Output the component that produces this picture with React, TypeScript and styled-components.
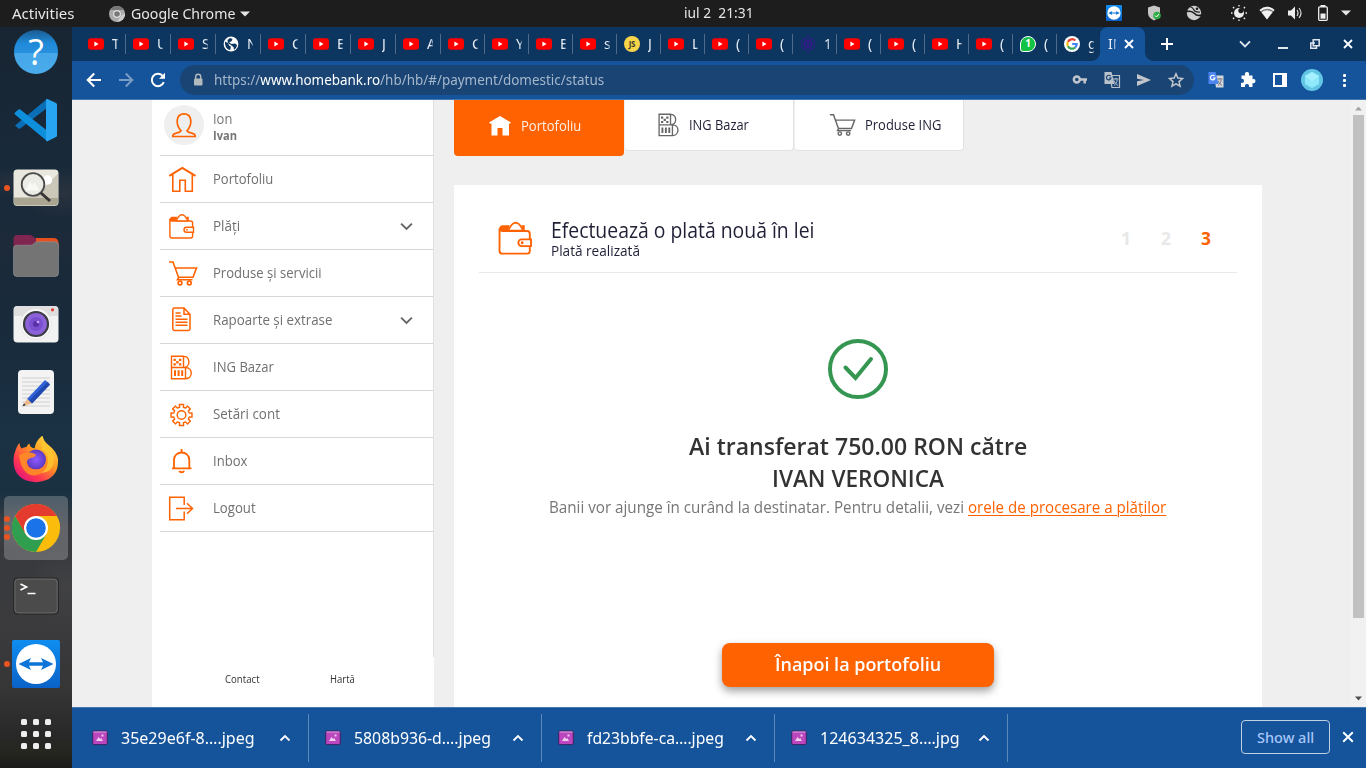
import React, { useLayoutEffect, useRef, useState } from "react";
import styled, { createGlobalStyle, css } from "styled-components";

const Global = createGlobalStyle`
  * { box-sizing: border-box; }
  html, body { margin: 0; padding: 0; overflow: hidden; }
  body { font-family: "Noto Sans", sans-serif; background: #efefef; }
  svg { display: block; flex: none; }
`;

const ui = `"Noto Sans", sans-serif`;
const page = `"Open Sans", "Noto Sans", sans-serif`;
const orange = "#ff6200";

/* ---------- condensed text ---------- */
const FitBox = styled.span<{ $w: number }>`
  display: inline-block;
  width: ${(p) => p.$w}px;
  white-space: pre;
  flex: none;
`;
const FitInner = styled.span<{ $underline?: boolean }>`
  display: inline-block;
  transform-origin: 0 50%;
  ${(p) => p.$underline && css`
    text-decoration: underline;
    text-decoration-thickness: 1px;
    text-underline-offset: 2px;
  `}
`;
function Fit({ w, underline, children }: { w: number; underline?: boolean; children: React.ReactNode }) {
  const ref = useRef<HTMLSpanElement>(null);
  const [k, setK] = useState(1);
  useLayoutEffect(() => {
    if (ref.current) setK(w / ref.current.offsetWidth);
  }, [w]);
  return (
    <FitBox $w={w}>
      <FitInner ref={ref} $underline={underline} style={{ transform: `scaleX(${k})` }}>{children}</FitInner>
    </FitBox>
  );
}

/* ---------- shell ---------- */
const Screen = styled.div`
  width: 1366px;
  height: 768px;
  overflow: hidden;
  display: flex;
  flex-direction: column;
`;
const TopBar = styled.header`
  height: 27px;
  flex: none;
  background: #1d1d1d;
  color: #e6e6e6;
  font: 14px/27px ${ui};
  display: grid;
  grid-template-columns: 684px 70px 1fr;
`;
const TopLeft = styled.div`
  display: flex;
  align-items: center;
  padding-left: 12px;
  & > svg:nth-of-type(1) { margin: 0 6px 0 35px; }
  & > svg:nth-of-type(2) { margin-left: 5px; }
`;
const Clock = styled.div`
  line-height: 26px;
`;
const TopRight = styled.div`
  display: flex;
  align-items: center;
  padding: 0 0 1px 352px;
`;
const TrayIcon = styled.span<{ $gap: number }>`
  margin-right: ${(p) => p.$gap}px;
`;
const Body = styled.div`
  display: flex;
  height: 741px;
`;
const Dock = styled.nav`
  width: 72px;
  height: 741px;
  flex: none;
  overflow: hidden;
  background:
    radial-gradient(ellipse 46px 26px at 62px 166px, #34394199, transparent),
    radial-gradient(ellipse 30px 14px at 10px 155px, #37394266, transparent),
    radial-gradient(ellipse 40px 24px at 22px 500px, #44474dcc, transparent),
    radial-gradient(ellipse 40px 40px at 66px 560px, #46464899, transparent),
    linear-gradient(#182532 0, #18293a 130px, #1c2a39 220px, #182a3b 300px, #1b3144 400px, #1a3142 465px, #36393e 500px, #3b3b3d 600px, #363637 660px, #282828 710px, #25261f 725px, #1b1b1b 741px);
`;
const DockList = styled.div`
  margin-top: -9px;
  display: flex;
  flex-direction: column;
`;
const DockSlot = styled.div<{ $active?: boolean }>`
  width: 64px;
  height: 64px;
  margin: 2px 4px;
  border-radius: 5px;
  display: flex;
  align-items: center;
  justify-content: center;
  position: relative;
  ${(p) => p.$active && css`background: #ffffff38;`}
`;
const Dots = styled.div`
  position: absolute;
  left: 0;
  top: 0;
  height: 64px;
  display: flex;
  flex-direction: column;
  justify-content: center;
  gap: 3px;
`;
const Dot = styled.i`
  width: 6px;
  height: 6px;
  border-radius: 50%;
  background: #e95420;
`;
const Browser = styled.div`
  width: 1294px;
  display: flex;
  flex-direction: column;
`;

/* ---------- browser chrome ---------- */
const TabStrip = styled.div`
  height: 34px;
  flex: none;
  padding-left: 8px;
  background: #0c3560;
  color: #e9eef5;
  font: 14px/34px ${ui};
  display: flex;
`;
const Tab = styled.div<{ $w: number; $last?: boolean }>`
  width: ${(p) => p.$w}px;
  height: 34px;
  padding-left: 8px;
  display: flex;
  align-items: center;
  position: relative;
  &::after {
    content: "";
    position: absolute;
    right: -1px;
    top: 7px;
    width: 1px;
    height: 20px;
    background: ${(p) => (p.$last ? "transparent" : "#4d6b8d")};
  }
`;
const TabText = styled.span<{ $w?: number; $ml?: number }>`
  width: ${(p) => p.$w ?? 6}px;
  margin-left: ${(p) => p.$ml ?? 8}px;
  overflow: hidden;
  white-space: nowrap;
  mask-image: linear-gradient(90deg, #000 60%, #0006);
`;
const ActiveTab = styled.div`
  width: 45px;
  height: 34px;
  padding-left: 8px;
  background: #15539a;
  border-radius: 8px 8px 0 0;
  display: flex;
  align-items: center;
  position: relative;
  & > svg { margin-left: 8px; }
  &::before, &::after {
    content: "";
    position: absolute;
    bottom: 0;
    width: 8px;
    height: 8px;
  }
  &::before { left: -8px; background: radial-gradient(circle at 0 0, transparent 7.5px, #15539a 8px); }
  &::after { right: -8px; background: radial-gradient(circle at 100% 0, transparent 7.5px, #15539a 8px); }
`;
const WindowButtons = styled.div`
  display: flex;
  align-items: center;
  padding-left: 16px;
`;
const Gap = styled.span<{ $w: number }>`
  width: ${(p) => p.$w}px;
  flex: none;
`;
const Toolbar = styled.div`
  height: 39px;
  flex: none;
  background: #15539a;
  border-bottom: 1px solid #4377b0;
  display: flex;
  align-items: center;
  padding-left: 12px;
`;
const NavIcons = styled.div`
  display: flex;
  gap: 12px;
  width: 96px;
`;
const Omnibox = styled.div`
  width: 1014px;
  height: 30px;
  border-radius: 15px;
  background: #194474;
  color: #a5b7cb;
  font: 15px/26px ${ui};
  display: flex;
  align-items: center;
  padding: 0 8px 0 8px;
  b { font-weight: 400; color: #fff; }
`;
const Url = styled.span`
  margin: -2px 0 0 6px;
  flex: 1;
`;
const OmniIcons = styled.div`
  display: flex;
  gap: 12px;
`;
const ExtIcons = styled.div`
  display: flex;
  align-items: center;
  gap: 12px;
  padding-left: 12px;
`;
const ProfileBadge = styled.span`
  margin: 0 -1px;
`;

/* ---------- page ---------- */
const Viewport = styled.main`
  height: 607px;
  background: #efefef;
  display: flex;
  font-family: ${page};
  padding-left: 80px;
  overflow: hidden;
`;
const Sidebar = styled.aside`
  width: 282px;
  height: 607px;
  background: #fff;
`;
const Menu = styled.div`
  height: 557px;
  padding-left: 8px;
  border-right: 1px solid #e0e0e0;
`;
const Profile = styled.div`
  height: 56px;
  border-bottom: 1px solid #d7d7d7;
  padding: 5px 0 0 4px;
  display: flex;
`;
const Avatar = styled.div`
  width: 40px;
  height: 40px;
  border-radius: 50%;
  background: #efefef;
  display: flex;
  align-items: center;
  justify-content: center;
`;
const Names = styled.div`
  margin: 4px 0 0 9px;
  display: flex;
  flex-direction: column;
  color: #767676;
  font-size: 15px;
  line-height: 19px;
  b { font-size: 12.5px; line-height: 16px; font-weight: 700; }
`;
const MenuRow = styled.div`
  height: 47px;
  border-bottom: 1px solid #d7d7d7;
  padding-left: 8px;
  display: flex;
  align-items: center;
  color: #707070;
  font-size: 15px;
`;
const MenuLabel = styled.span`
  margin-left: 15px;
  width: 187px;
  padding-bottom: 2px;
  line-height: 42px;
`;
const SideFooter = styled.div`
  padding-left: 73px;
  display: flex;
  gap: 70px;
  color: #333;
  font-size: 11px;
  line-height: 44px;
`;
const Main = styled.section`
  width: 808px;
  margin-left: 20px;
`;
const NavTabs = styled.div`
  height: 85px;
  display: flex;
  align-items: flex-start;
  font-size: 15px;
`;
const NavTab = styled.div<{ $on?: boolean; $pad: number; $gap: number }>`
  width: ${(p) => (p.$on ? 170 : 169)}px;
  height: ${(p) => (p.$on ? 56 : 51)}px;
  margin-left: ${(p) => (p.$on ? 0 : 1)}px;
  padding: 0 0 ${(p) => (p.$on ? 4 : 0)}px ${(p) => p.$pad}px;
  background: ${(p) => (p.$on ? orange : "#fff")};
  color: ${(p) => (p.$on ? "#fff0e6" : "#1f1f35")};
  border-radius: 0 0 4px 4px;
  ${(p) => !p.$on && css`border-right: 1px solid #e2e2e2; border-bottom: 1px solid #e2e2e2;`}
  display: flex;
  align-items: center;
  gap: ${(p) => p.$gap}px;
`;
const NavText = styled.span`
  padding-bottom: 3px;
  line-height: 20px;
`;
const Card = styled.div`
  height: 522px;
  background: #fff;
  padding: 0 25px;
`;
const CardHead = styled.div`
  height: 88px;
  border-bottom: 1px solid #e9e9e9;
  padding: 34px 26px 0 18px;
  display: flex;
  color: #1f1f35;
`;
const Heading = styled.div`
  margin: -1px 0 0 18px;
  display: flex;
  flex-direction: column;
  flex: 1;
  h1 { margin: 0; font-size: 21px; font-weight: 400; line-height: 25px; }
  p { margin: 0; font-size: 14.5px; line-height: 16px; }
`;
const Steps = styled.div`
  display: flex;
  gap: 30px;
  padding-top: 6px;
  font-size: 17.5px;
  line-height: 26px;
  font-weight: 700;
  color: #e8e8e8;
  span { width: 10px; text-align: center; }
  span:last-child { color: ${orange}; }
`;
const Result = styled.div`
  display: flex;
  flex-direction: column;
  align-items: center;
  padding-top: 66px;
  h2 { margin: 31px 0 0; font-size: 24px; line-height: 32px; font-weight: 600; color: #333; text-align: center; display: flex; flex-direction: column; align-items: center; }
  p { margin: 0 0 1px -1px; font-size: 16.5px; line-height: 25px; color: #767676; }
  a { color: ${orange}; }
`;
const Primary = styled.button`
  width: 272px;
  height: 44px;
  margin-top: 123px;
  padding: 0 0 3px;
  border: 0;
  border-radius: 8px;
  background: ${orange};
  color: #fff;
  font: 600 18.5px/40px ${page};
  box-shadow: 0 4px 8px rgba(0, 0, 0, 0.38);
`;
const ScrollBar = styled.div`
  margin-left: auto;
  width: 15px;
  background: #f1f1f1;
  display: flex;
  flex-direction: column;
  align-items: center;
`;
const Thumb = styled.div`
  width: 11px;
  height: 503px;
  margin-bottom: 77px;
  background: #c1c1c1;
`;

/* ---------- downloads ---------- */
const Downloads = styled.footer`
  height: 61px;
  flex: none;
  background: #15539a;
  border-top: 1px solid #4377b0;
  display: flex;
  padding: 6px 0 6px 4px;
  font: 16.5px/48px ${ui};
  color: #fff;
`;
const DownloadItem = styled.div`
  width: 233px;
  height: 48px;
  border-right: 1px solid #5d88bb;
  padding-left: 16px;
  display: flex;
  align-items: center;
`;
const FileName = styled.span`
  margin-left: 13px;
  width: 158px;
`;
const ShowAll = styled.button`
  width: 89px;
  height: 34px;
  margin: 6px 12px 0 auto;
  border: 1px solid #c0d0e4;
  border-radius: 4px;
  background: transparent;
  color: #a8c7fa;
  padding: 0;
  font: 500 14.5px/30px ${ui};
`;
const CloseBar = styled.div`
  padding: 17px 12px 0 0;
`;

/* ---------- small drawings ---------- */
const line = { fill: "none", strokeLinecap: "butt" as const };

const YouTube = () => (
  <svg width="16" height="16" viewBox="0 0 16 16">
    <rect x="0" y="2.2" width="16" height="11.6" rx="3" fill="#f00" />
    <path d="M6.4 5.6v4.8L10.5 8z" fill="#fff" />
  </svg>
);
const Globe = () => (
  <svg width="16" height="16" viewBox="0 0 16 16">
    <circle cx="8" cy="8" r="7.4" fill="#fff" />
    <path d="M2 5.5l3 1.6 1.3 2.6 1.6.8-.7 3.6C4 13.500 1.800 11 2 5.500zM7 2l2.500 1-.8 2-2.500 1.500L8.500 8l3.500-.5 2 1.500c0 2-1.500 4-3 4.700L10.500 11l-2-1.500L5 7l-.5-3z" fill="#0c3560" />
  </svg>
);
const JsIcon = styled.span`
  width: 16px;
  height: 16px;
  border-radius: 50%;
  background: #f7d54a;
  color: #3b3a2a;
  font: 700 8px/16px ${ui};
  letter-spacing: -0.3px;
  text-align: center;
`;
const Atom = () => (
  <svg width="16" height="16" viewBox="0 0 16 16" fill="none" stroke="#3d1496" strokeWidth=".8">
    <ellipse cx="8" cy="8" rx="7.400" ry="2.900" transform="rotate(30 8 8)" />
    <ellipse cx="8" cy="8" rx="7.400" ry="2.900" transform="rotate(90 8 8)" />
    <ellipse cx="8" cy="8" rx="7.400" ry="2.900" transform="rotate(150 8 8)" />
    <circle cx="8" cy="8" r="1" fill="#3d1496" />
  </svg>
);
const WhatsBadge = styled.span`
  width: 16px;
  height: 16px;
  border-radius: 50% 50% 50% 3px;
  border: 1.5px solid #fff;
  background: #12c245;
  color: #fff;
  font: 700 10px/13px ${ui};
  text-align: center;
`;
const GoogleG = () => (
  <svg width="16" height="16" viewBox="0 0 16 16">
    <circle cx="8" cy="8" r="8" fill="#fff" />
    <g fill="none" strokeWidth="2.200">
      <path d="M11.300 4.500A4.700 4.700 0 0 0 3.900 5.800" stroke="#ea4335" />
      <path d="M3.900 5.800a4.700 4.700 0 0 0 0 4.400" stroke="#fbbc05" />
      <path d="M3.900 10.200a4.700 4.700 0 0 0 7.200 1.400" stroke="#34a853" />
      <path d="M11.100 11.600A4.700 4.700 0 0 0 12.700 8H8.200" stroke="#4285f4" />
    </g>
  </svg>
);
const Cross = ({ s = 10, w = 1.8 }) => (
  <svg width={s} height={s} viewBox="0 0 10 10" stroke="#fff" strokeWidth={w}><path d="M1 1l8 8M9 1L1 9" /></svg>
);
const Chevron = ({ up, color = "#fff", s = 12, w = 1.8 }: { up?: boolean; color?: string; s?: number; w?: number }) => (
  <svg width={s} height={s} viewBox="0 0 12 12" fill="none" stroke={color} strokeWidth={w}>
    <path d={up ? "M1.500 8.500L6 4l4.500 4.500" : "M1 3.300l5 5 5-5"} />
  </svg>
);
const TeamViewer = ({ s }: { s: number }) => (
  <svg width={s} height={s} viewBox="0 0 48 48">
    <defs><linearGradient id={`tv${s}`} x2="0" y2="1"><stop stopColor="#0f8df0" /><stop offset="1" stopColor="#0a62c8" /></linearGradient></defs>
    <rect width="48" height="48" rx="2" fill={`url(#tv${s})`} />
    <circle cx="24" cy="24" r="20" fill="#fff" />
    <path d="M6.500 24l12.500-6-2 4.200h14L29 18l12.500 6L29 30l2-4.200H17L19 30z" fill="#0d74d8" />
  </svg>
);

const Svg20 = ({ children, color = "#fff", w = 2 }: { children: React.ReactNode; color?: string; w?: number }) => (
  <svg width="20" height="20" viewBox="0 0 20 20" fill="none" stroke={color} strokeWidth={w}>{children}</svg>
);
const TranslateGlyph = ({ front, back, g }: { front: string; back: string; g: string }) => (
  <svg width="20" height="20" viewBox="0 0 20 20">
    <path d="M8 5.500h9.500v12H10z" fill={back === "none" ? "#194474" : back} stroke={back === "none" ? "#bac1cb" : "none"} strokeWidth="1.200" />
    <path d="M11 9h5.500M13.800 8v1M12 15.500c2-1.500 3-3.500 3.200-6M12 10.500c.8 2.500 2 3.700 4 5" stroke={back === "none" ? "#bac1cb" : "#777"} fill="none" />
    <path d="M2.500 2h7l3 12h-10z" fill={front} />
    <path d="M8.600 6.200A2.300 2.300 0 1 0 9 8H7" stroke={g} fill="none" strokeWidth="1.200" />
  </svg>
);

/* ---------- bank icons ---------- */
const Bank = ({ children, color = orange, w = 30, h = 28, vb = "0 0 30 28", sw = 1.6 }: any) => (
  <svg width={w} height={h} viewBox={vb} stroke={color} strokeWidth={sw} {...line}>{children}</svg>
);
const WalletShape = () => (
  <>
    <path d="M24.600 15.300V11q0-2-2-2H4Q1.900 9 1.900 7v16.800q0 2.200 2.200 2.200h18.500q2 0 2-2v-3.700" strokeWidth="1.400" />
    <path d="M1.500 9Q1.300 4.700 4.500 4.700H9.500L8 9zM18.300 4.700H20.800V9h-1z" fill={orange} stroke="none" />
    <path d="M8 8.800C9.500 8 10 3 14 2.700c4 .3 4.500 5.300 6 6.100z" fill="#fff" strokeWidth="1.300" />
    <path d="M25.500 15.300h-7a2.500 2.500 0 0 0 0 5h7z" strokeWidth="1.400" />
    <circle cx="18.900" cy="17.800" r=".6" strokeWidth="1" />
  </>
);
const CartShape = () => (
  <>
    <path d="M1 3h4l5.500 15.300H25L28.500 9H7.500M11 18l-1.500 2.700h15" />
    <circle cx="12" cy="24" r="1.900" /><circle cx="21.300" cy="24" r="1.900" />
  </>
);
const BazarShape = ({ color = orange }) => (
  <>
    <path d="M3.500 3.300h12v11.200h-12zM3.500 14.500h14v11.200h-14zM15.500 3.300c7.200 0 7.200 11.200 0 11.200M17.500 14.500c7.700 0 7.700 11.200 0 11.200" strokeWidth="1.400" />
    <g fill={color} stroke="none">
      <path d="M5.500 5.800h2.300v2.200H5.500zM11 5.800h2.300v2.200H11zM8.200 8h2.400v2.400H8.200zM5.500 10.300h2.300v2.200H5.500zM11 10.300h2.300v2.200H11zM6 17.300h2v5.700h-2zM9.600 17.300h2v5.700h-2zM13.200 17.300h2v5.700h-2z" />
    </g>
  </>
);
const gearPath = (() => {
  const pts: string[] = [];
  for (let i = 0; i < 8; i++) {
    const a = (i * Math.PI) / 4;
    [[-0.24, 8], [-0.2, 10.7], [0.2, 10.7], [0.24, 8]].forEach(([d, r]) =>
      pts.push(`${(13.5 + r * Math.sin(a + d)).toFixed(2)} ${(15 - r * Math.cos(a + d)).toFixed(2)}`)
    );
  }
  return `M${pts.join("L")}Z`;
})();

const menu: { label: string; w: number; more?: boolean; icon: React.ReactNode }[] = [
  { label: "Portofoliu", w: 60, icon: <><path d="M1.300 10.900L14.300 3l13.200 7.900" strokeWidth="2" /><path d="M4.800 9.500v16.800h7V15.200h5.500v11.100h7V9.500" /></> },
  { label: "Plăți", w: 27, more: true, icon: <WalletShape /> },
  { label: "Produse și servicii", w: 109, icon: <CartShape /> },
  { label: "Rapoarte și extrase", w: 119, more: true, icon: <path d="M16 2H6.500Q4.800 2 4.800 3.700v19.100q0 1.700 1.700 1.700H20.300q1.700 0 1.700-1.700V8.300zM16 2v6.300h6M7.500 7h5M7.500 10h6M7.500 13.200h12M7.500 16.200h12M7.500 19.200h12" strokeWidth="1.500" /> },
  { label: "ING Bazar", w: 61, icon: <BazarShape /> },
  { label: "Setări cont", w: 67, icon: <><path d={gearPath} strokeWidth="1.400" strokeLinejoin="round" /><circle cx="13.500" cy="15" r="4.300" strokeWidth="1.400" /></> },
  { label: "Inbox", w: 34, icon: <><path d="M13.600 2v3M4 21.300h19.500M6 21V13c0-10 15.300-10 15.300 0v8" strokeWidth="1.800" /><path d="M11.300 23.800c.8 2 3.900 2 4.700 0" strokeWidth="2" /></> },
  { label: "Logout", w: 43, icon: <path d="M16.200 11V3.200H1.700v22.500h14.500V17.500M8 14.500h16.500M19 9.300l5.500 5.200-5.500 5.200" strokeWidth="1.500" /> },
];

/* ---------- dock icons ---------- */
const D = ({ children }: { children: React.ReactNode }) => <svg width="48" height="48" viewBox="0 0 48 48">{children}</svg>;
const HelpBall = styled.div`
  width: 44px;
  height: 44px;
  border-radius: 50%;
  background: linear-gradient(#1b5c92 0, #1f8ad8 30%, #2790df 52%, #45a6e8 53%, #4aaceb 100%);
  color: #fff;
  font: 400 36px/43px "Open Sans", sans-serif;
  text-align: center;
`;
const dock: { icon: React.ReactNode; dots?: number; active?: boolean }[] = [
  { icon: <HelpBall>?</HelpBall> },
  { icon: <D>
      <path d="M3 29.500l3.500 3q.8.700 1.700 0L35 12V3z" fill="#0b6fb8" />
      <path d="M3 16.500l3.500-3q.8-.7 1.700 0L35 34.500V45L3 18.500q-1-1 0-2z" fill="#0e8fdc" />
      <path d="M34 3.200q.8-.6 2 0l8 3.800q1 .5 1 1.500v31q0 1-1 1.500l-8 4q-1.200.6-2 0z" fill="#27a5f3" />
    </D> },
  { dots: 1, icon: <D>
      <rect x="1.500" y="5.500" width="45" height="36.500" rx="4" fill="#e9e8df" />
      <path d="M2 33.500h44V38q0 3.500-3 3.500H5q-3 0-3-3z" fill="#a9a591" />
      <path d="M22 33.500L46 9.500v24z" fill="#cbc8ba" /><circle cx="35.500" cy="16" r="4.700" fill="#fff" />
      <circle cx="21" cy="20.500" r="11.300" fill="#ecece6" stroke="#4b4b4b" strokeWidth="1.800" />
      <path d="M13 26.500l5-9 2.500 4 2-3 5 8z" fill="#f8f8f4" />
      <path d="M29 29l9 8" stroke="#333" strokeWidth="3" />
    </D> },
  { icon: <D>
      <path d="M10 6h31q5.500 0 5.500 5v6H10z" fill="#e6501e" />
      <path d="M1.500 7q0-4 4-4H18q2 0 3 1.500T24 6v9H1.500z" fill="#80254f" />
      <path d="M1.500 16.500q0-3.300 3.500-3.300h14q1.500 0 3-1.700t3.500-1.700H43q3.500 0 3.500 3.500V41q0 3.500-3.500 3.500H5q-3.500 0-3.500-3.500z" fill="#747474" stroke="#969696" strokeWidth=".6" />
    </D> },
  { icon: <D>
      <rect x="1.500" y="6" width="45" height="36.500" rx="4" fill="#f2f2f2" /><path d="M2 16V10q0-4 4-4h36q4 0 4 4v6z" fill="#dfdfdf" />
      <circle cx="24" cy="24" r="15.500" fill="#f7f7f7" stroke="#ddd" strokeWidth=".6" />
      <circle cx="24" cy="24" r="12" fill="#8c62d8" stroke="#3b3b42" strokeWidth="2.200" />
      <circle cx="24" cy="24" r="7" fill="#7a4fd0" /><circle cx="24" cy="24" r="3" fill="#5a30a8" /><circle cx="26" cy="22" r="1.300" fill="#c9adff" />
      <circle cx="40.500" cy="9.800" r="1.600" fill="#e23a2e" />
    </D> },
  { icon: <D>
      <rect x="6" y="2" width="36" height="44" rx="4" fill="#f3f3f3" />
      <path d="M10 10h28M10 14h28M10 18h28M10 22h28M10 26h28M10 30h28M10 34h28M10 38h28" stroke="#cfcfcf" />
      <path d="M15 31L33 12l5 4.500L20 35.500z" fill="#2f62d9" /><path d="M17 33l18.500-19 2.500 2.500-18 19z" fill="#2148ac" />
      <path d="M15 31l5 4.500-9.500 2.800z" fill="#e9b98b" /><path d="M10.500 38.300l1.500-3 1.700 2z" fill="#333" />
    </D> },
  { icon: <svg width="48" height="48" viewBox="0 1 48 48">
      <defs>
        <linearGradient id="fx" x1="1" x2=".2" y2="1"><stop stopColor="#fff44f" /><stop offset=".45" stopColor="#ff9a1f" /><stop offset=".75" stopColor="#ff3b4d" /><stop offset="1" stopColor="#e3117d" /></linearGradient>
        <radialGradient id="fp"><stop stopColor="#9059ff" /><stop offset="1" stopColor="#5b3ac0" /></radialGradient>
      </defs>
      <path d="M4 14q2-5 3.500-6 0 3.500 2 5.500 2-1.500 5-1.500 1-3 3-3.500 0 4 5 5Q23.500 6 30.500.500q1 5.500 5.500 9 9 7 10 15 1 21-22 22.700Q2 46 1.500 26q0-7 2.500-12z" fill="url(#fx)" />
      <path d="M24 14q10-1 12 9 1 11-8 15 14 0 14-15-2-11-11.500-16Q29 10 30 14z" fill="#ffc830" opacity=".8" />
      <circle cx="24" cy="24.500" r="10" fill="url(#fp)" />
      <path d="M7 20q9-5 17-.5-1 3-5 3.500-4.500 1-4 5 1 7 10 6.500 6-.5 9-6-1 11-11 12-13.500 0-16-20.500z" fill="#ff8a26" opacity=".95" />
    </svg> },
  { active: true, dots: 3, icon: <D>
      <circle cx="24" cy="24" r="24" fill="#fbbc0c" />
      <path d="M3.200 12A24 24 0 0 0 24 48L34.400 30 24 24 13.600 30z" fill="#2f9e4f" />
      <path d="M24 12h20.800A24 24 0 0 0 3.200 12l10.400 18L24 24z" fill="#e33b2e" />
      <path d="M24 12h20.800q4 7 3 14L34.400 30 24 24z" fill="#fbbc0c" />
      <circle cx="24" cy="24" r="12" fill="#fff" /><circle cx="24" cy="24" r="9.800" fill="#1a73e8" />
    </D> },
  { icon: <D>
      <rect x="1.800" y="6" width="44.500" height="36" rx="4" fill="#4b4b4b" stroke="#242424" strokeWidth="1.200" />
      <rect x="2.900" y="7.100" width="42.300" height="33.800" rx="3" fill="none" stroke="#707070" strokeWidth=".8" />
      <path d="M8.500 12l6 3-6 3M15.500 21.500h8" stroke="#fff" strokeWidth="1.700" fill="none" />
    </D> },
  { dots: 1, icon: <TeamViewer s={48} /> },
  { icon: <D>{[0, 1, 2].flatMap((r) => [0, 1, 2].map((c) => <rect key={`${r}${c}`} x={9 + c * 12} y={11 + r * 12} width="6" height="6" rx="1.500" fill="#eee" />))}</D> },
];

const tabs: [string, string][] = [
  ["yt", "T"], ["yt", "U"], ["yt", "S"], ["globe", "N"], ["yt", "C"], ["yt", "E"], ["yt", "J"], ["yt", "A"],
  ["yt", "C"], ["yt", "Y"], ["yt", "E"], ["yt", "s"], ["js", "J"], ["yt", "L"], ["yt", "("], ["yt", "("],
  ["atom", "1"], ["yt", "("], ["yt", "("], ["yt", "H"], ["yt", "("], ["wa", "("], ["g", "g"],
];
const favicon = (k: string) =>
  k === "yt" ? <YouTube /> : k === "globe" ? <Globe /> : k === "js" ? <JsIcon>JS</JsIcon> : k === "atom" ? <Atom /> : k === "wa" ? <WhatsBadge>1</WhatsBadge> : <GoogleG />;

const files: [string, number][] = [["35e29e6f-8….jpeg", 134], ["5808b936-d….jpeg", 137], ["fd23bbfe-ca….jpeg", 137], ["124634325_8….jpg", 140]];

const FileIcon = () => (
  <svg width="16" height="16" viewBox="0 0 16 16">
    <rect x=".7" y="1" width="14.600" height="13.600" rx="1.500" fill="#bb46bd" stroke="#3a2461" />
    <path d="M1.500 2h13" stroke="#d9a2dc" />
    <path d="M4 11l2.500-4 1.700 2 1-1 1.800 3z" fill="#f0cdf0" /><path d="M9.500 4.500h2v2h-2z" fill="#f0cdf0" />
  </svg>
);

export default function App() {
  return (
    <Screen>
      <Global />
      <TopBar>
        <TopLeft>
          <Fit w={62}>Activities</Fit>
          <svg width="16" height="16" viewBox="0 0 16 16">
            <circle cx="8" cy="8" r="8" fill="#aaa" /><path d="M1 4A8 8 0 0 1 15 4H8z" fill="#777" /><path d="M8 16l4-6 4-3a8 8 0 0 1-8 9z" fill="#ccc" />
            <circle cx="8" cy="8" r="3.800" fill="#eee" /><circle cx="8" cy="8" r="2.800" fill="#777" />
          </svg>
          <Fit w={104}>Google Chrome</Fit>
          <svg width="10" height="6" viewBox="0 0 10 6"><path d="M0 .5h10L5 5.500z" fill="#e6e6e6" /></svg>
        </TopLeft>
        <Clock><Fit w={70}>iul 2  21:31</Fit></Clock>
        <TopRight>
          <TrayIcon $gap={24}><TeamViewer s={16} /></TrayIcon>
          <TrayIcon $gap={24}>
            <svg width="16" height="16" viewBox="0 0 16 16"><path d="M8 .5l6 2V8q0 5-6 7.500Q2 13 2 8V2.500z" fill="#c6c6c6" /><circle cx="11" cy="10.500" r="3.800" fill="#2fae47" /><path d="M9 10.500l1.500 1.500 2.500-3" stroke="#fff" fill="none" /></svg>
          </TrayIcon>
          <TrayIcon $gap={29}>
            <svg width="16" height="16" viewBox="0 0 16 16"><circle cx="8" cy="8" r="7.200" fill="#cfcfcf" /><path d="M1 6.500q5-1 7.500 2T15 10" stroke="#1d1d1d" fill="none" strokeWidth="1.500" /><path d="M4 1.500q3 1 4 3.500t6 2" stroke="#1d1d1d" fill="none" strokeWidth="1.200" /><circle cx="11" cy="3.800" r="1.300" fill="#1d1d1d" /></svg>
          </TrayIcon>
          <TrayIcon $gap={12}>
            <svg width="16" height="16" viewBox="0 0 16 16"><circle cx="8" cy="8" r="5" fill="#eee" /><circle cx="9.900" cy="5.600" r="2.600" fill="#1d1d1d" /><g stroke="#eee" strokeWidth="1.300"><path d="M8 0v1.500M8 14.500V16M0 8h1.500M14.500 8H16M2 2l1.200 1.200M12.800 12.800L14 14M2 14l1.200-1.200M12.800 3.200L14 2" /></g></svg>
          </TrayIcon>
          <TrayIcon $gap={12}>
            <svg width="16" height="16" viewBox="0 0 16 16"><path d="M.5 5Q8-1.500 15.500 5L8 14.500z" fill="#777" /><path d="M2.500 7.200q5.500-4 11 0L8 14.500zM.5 5Q8-1.500 15.500 5l-1 1.200q-6.500-5-13 0z" fill="#f2f2f2" /></svg>
          </TrayIcon>
          <TrayIcon $gap={12}>
            <svg width="16" height="16" viewBox="0 0 16 16"><path d="M1 5.500h3l4-4v13l-4-4H1z" fill="#eee" /><path d="M10 5q2 3 0 6M12 3q4 5 0 10" stroke="#ddd" fill="none" strokeWidth="1.200" /></svg>
          </TrayIcon>
          <TrayIcon $gap={10}>
            <svg width="16" height="16" viewBox="0 0 16 16"><path d="M5.500 0h5v2h-5z" fill="#eee" /><rect x="3.700" y="1.800" width="8.600" height="13.500" rx="1" fill="none" stroke="#eee" strokeWidth="1.300" /><path d="M5.500 8.500h5v5.200h-5z" fill="#eee" /></svg>
          </TrayIcon>
          <svg width="10" height="6" viewBox="0 0 10 6"><path d="M0 .5h10L5 5.500z" fill="#e6e6e6" /></svg>
        </TopRight>
      </TopBar>

      <Body>
        <Dock>
          <DockList>
            {dock.map((d, i) => (
              <DockSlot key={i} $active={d.active}>
                {d.dots && <Dots>{Array.from({ length: d.dots }, (_, n) => <Dot key={n} />)}</Dots>}
                {d.icon}
              </DockSlot>
            ))}
          </DockList>
        </Dock>

        <Browser>
          <TabStrip>
            {tabs.map(([k, t], i) => (
              <Tab key={i} $w={i < 8 ? 45 : 44} $last={i === tabs.length - 1}>
                {favicon(k)}
                <TabText>{t}</TabText>
              </Tab>
            ))}
            <ActiveTab>
              <TabText $w={8} $ml={0}>IN</TabText>
              <svg width="10" height="10" viewBox="0 0 10 10" stroke="#fff" strokeWidth="1.900"><path d="M1 1l8 8M9 1L1 9" /></svg>
            </ActiveTab>
            <WindowButtons>
              <svg width="12" height="12" viewBox="0 0 12 12" stroke="#fff" strokeWidth="2"><path d="M6 0v12M0 6h12" /></svg>
              <Gap $w={66} />
              <Chevron color="#dfe6ee" w={1.9} />
              <Gap $w={27} />
              <svg width="10" height="12" viewBox="0 0 10 12"><path d="M0 9h10v2H0z" fill="#dfe6ee" /></svg>
              <Gap $w={22} />
              <svg width="10" height="10" viewBox="0 0 10 10" fill="none" stroke="#dfe6ee" strokeWidth="1.500"><path d="M3.200.8h6v6h-6zM5 4H.8v5.200H6.500V7" /></svg>
              <Gap $w={23} />
              <Cross />
            </WindowButtons>
          </TabStrip>

          <Toolbar>
            <NavIcons>
              <Svg20><path d="M17 10H4M10.200 3.500L3.700 10l6.500 6.500" /></Svg20>
              <Svg20 color="#7a9cc5"><path d="M3 10h13M9.800 3.500l6.500 6.500-6.500 6.500" /></Svg20>
              <Svg20><path d="M15.800 12.200A6.200 6.200 0 1 1 14.500 5.600" /><path d="M17 2.800v6h-6z" fill="#fff" stroke="none" /></Svg20>
            </NavIcons>
            <Omnibox>
              <svg width="20" height="20" viewBox="0 0 20 20"><rect x="6" y="8.500" width="8.500" height="7" rx="1" fill="#b4b9bf" /><path d="M7.700 9V6.800a2.500 2.500 0 0 1 5 0V9" stroke="#b4b9bf" strokeWidth="1.400" fill="none" /></svg>
              <Url><Fit w={390}>https://<b>www.homebank.ro</b>/hb/hb/#/payment/domestic/status</Fit></Url>
              <OmniIcons>
                <Svg20 color="#c3c6cb"><circle cx="6.800" cy="9.500" r="3" strokeWidth="2.400" /><path d="M9.500 9.500H17M14.700 10v3.500" strokeWidth="2.500" /></Svg20>
                <TranslateGlyph front="#bac1cb" back="none" g="#194474" />
                <Svg20><path d="M3 4l14 6-14 6V11.300L10 10 3 8.700z" fill="#c3c6cb" stroke="none" /></Svg20>
                <Svg20 color="#c3c6cb" w={1.5}><path d="M10 3.800l1.900 4.300 4.600.4-3.500 3.100 1.100 4.600L10 13.800l-4.100 2.400L7 11.600 3.500 8.500l4.600-.4z" /></Svg20>
              </OmniIcons>
            </Omnibox>
            <ExtIcons>
              <TranslateGlyph front="#4d86f0" back="#d5d8dc" g="#fff" />
              <Svg20><path d="M3.500 5.500H7q-.8-3.500 2-3.500t2 3.500h3.500v3.700q3-.8 3 1.900t-3 1.900v4H11q.5-3-2-3t-2 3H3v-4.200q3 .5 3-1.900t-2.500-2z" fill="#fff" stroke="none" /></Svg20>
              <Svg20><rect x="4" y="4" width="12" height="12" /><path d="M12 4h4v12h-4z" fill="#fff" stroke="none" /></Svg20>
              <ProfileBadge>
                <svg width="22" height="22" viewBox="0 0 22 22"><circle cx="11" cy="11" r="11" fill="#62c6e4" /><path d="M11 3l7 4v8l-7 4-7-4V7z" fill="#8fe9fa" /><path d="M11 3l7 4-7 5-7-5z" fill="#a6f1ff" /></svg>
              </ProfileBadge>
              <Svg20><g fill="#fff" stroke="none"><rect x="9" y="4" width="3" height="3" rx="1" /><rect x="9" y="9" width="3" height="3" rx="1" /><rect x="9" y="14" width="3" height="3" rx="1" /></g></Svg20>
            </ExtIcons>
          </Toolbar>

          <Viewport>
            <Sidebar>
              <Menu>
                <Profile>
                  <Avatar>
                    <svg width="26" height="26" viewBox="0 0 26 26" fill="none" stroke={orange} strokeWidth="1.700">
                      <path d="M10 18.500C4.500 13 4.500 1.800 13 1.800S21.500 13 16 18.500q.3 1.500 4 2.300 4.300.8 4.300 3.700H1.700q0-2.900 4.300-3.700 3.700-.8 4-2.300z" />
                    </svg>
                  </Avatar>
                  <Names>
                    <Fit w={19}>Ion</Fit>
                    <b><Fit w={24}>Ivan</Fit></b>
                  </Names>
                </Profile>
                {menu.map((m) => (
                  <MenuRow key={m.label}>
                    <Bank>{m.icon}</Bank>
                    <MenuLabel><Fit w={m.w}>{m.label}</Fit></MenuLabel>
                    {m.more && <Chevron color="#666" s={13} w={1.8} />}
                  </MenuRow>
                ))}
              </Menu>
              <SideFooter>
                <Fit w={35}>Contact</Fit>
                <Fit w={25}>Hartă</Fit>
              </SideFooter>
            </Sidebar>

            <Main>
              <NavTabs>
                <NavTab $on $pad={35} $gap={10}>
                  <svg width="22" height="20" viewBox="0 0 22 20"><path d="M11 0l11 6.500-1.200 1.300L20 7.500V19.500h-6.500V12h-5v7.500H2.500v-12l-1.300.3L0 6.500z" fill="#fff" /></svg>
                  <NavText><Fit w={60}>Portofoliu</Fit></NavText>
                </NavTab>
                <NavTab $pad={32} $gap={8}>
                  <Bank color="#666" w={24} h={24} vb="1.300 2 25.200 25.200"><BazarShape color="#666" /></Bank>
                  <NavText><Fit w={60}>ING Bazar</Fit></NavText>
                </NavTab>
                <NavTab $pad={34} $gap={9}>
                  <Bank color="#666" w={27} h={25} vb="0 1.500 30 27"><CartShape /></Bank>
                  <NavText><Fit w={76}>Produse ING</Fit></NavText>
                </NavTab>
              </NavTabs>
              <Card>
                <CardHead>
                  <Bank w={36} h={38} vb="0 0 27 28.500" sw={1.5}><WalletShape /></Bank>
                  <Heading>
                    <h1><Fit w={263}>Efectuează o plată nouă în lei</Fit></h1>
                    <p><Fit w={89}>Plată realizată</Fit></p>
                  </Heading>
                  <Steps><span>1</span><span>2</span><span>3</span></Steps>
                </CardHead>
                <Result>
                  <svg width="60" height="60" viewBox="0 0 60 60" fill="none" stroke="#349651" strokeWidth="4">
                    <circle cx="30" cy="30" r="28" /><path d="M17.500 28.500l10 10.500L43 20" strokeLinecap="round" />
                  </svg>
                  <h2>
                    <Fit w={338}>Ai transferat 750.00 RON către</Fit>
                    <Fit w={172}>IVAN VERONICA</Fit>
                  </h2>
                  <p>
                    <Fit w={419}>{"Banii vor ajunge în curând la destinatar. Pentru detalii, vezi "}</Fit>
                    <a><Fit w={198} underline>orele de procesare a plăților</Fit></a>
                  </p>
                  <Primary><Fit w={166}>Înapoi la portofoliu</Fit></Primary>
                </Result>
              </Card>
            </Main>

            <ScrollBar>
              <svg width="15" height="15" viewBox="0 0 15 15"><path d="M4 10.500h7l-3.500-4z" fill="#a3a3a3" /></svg>
              <Thumb />
              <svg width="15" height="12" viewBox="0 0 15 12"><path d="M4 1.500h7l-3.500 4z" fill="#505050" /></svg>
            </ScrollBar>
          </Viewport>

          <Downloads>
            {files.map(([f, w]) => (
              <DownloadItem key={f}>
                <FileIcon />
                <FileName><Fit w={w}>{f}</Fit></FileName>
                <Chevron up s={12} />
              </DownloadItem>
            ))}
            <ShowAll><Fit w={57}>Show all</Fit></ShowAll>
            <CloseBar><Cross s={12} w={1.6} /></CloseBar>
          </Downloads>
        </Browser>
      </Body>
    </Screen>
  );
}
